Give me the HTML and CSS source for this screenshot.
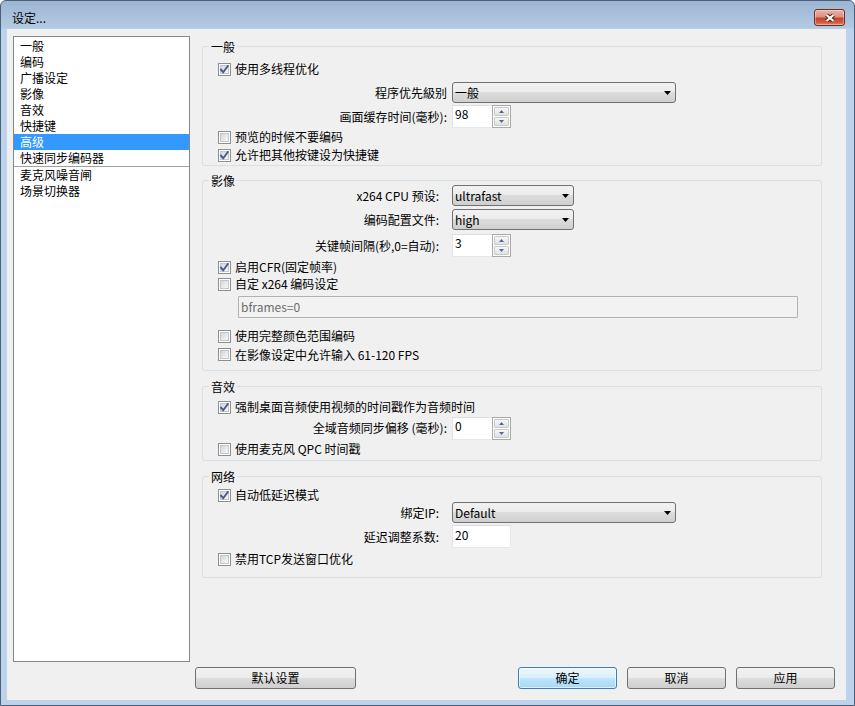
FILE: index.html
```html
<!DOCTYPE html>
<html lang="zh-CN">
<head>
<meta charset="utf-8">
<title>设定...</title>
<link rel="stylesheet" href="styles.css">
</head>
<body>
<div class="window">
  <div class="titlebar">
    <span class="title">设定...</span>
    <span class="close"><svg class="close-x" width="14" height="10" viewBox="0 0 14 10"><path class="x-out" d="M3.5 2 L10.5 8 M10.5 2 L3.5 8"/><path class="x-in" d="M3.5 2 L10.5 8 M10.5 2 L3.5 8"/></svg></span>
  </div>
  <div class="client">
    <div class="main">
      <ul class="list">
        <li>一般</li>
        <li>编码</li>
        <li>广播设定</li>
        <li>影像</li>
        <li>音效</li>
        <li>快捷键</li>
        <li class="sel">高级</li>
        <li>快速同步编码器</li>
        <li class="sep"></li>
        <li>麦克风噪音闸</li>
        <li>场景切换器</li>
      </ul>
      <div class="panel">
        <fieldset class="group g1">
          <legend>一般</legend>
          <div class="body">
            <label class="check"><span class="cb"><span class="cb-in"><svg class="tick" viewBox="0 0 9 9"><path d="M0.4 4 L3.2 7.2 L8.4 0.2"/></svg></span></span>使用多线程优化</label>
            <div class="row"><span class="lbl">程序优先級别</span><div class="combo w224"><span>一般</span><svg class="arrow" viewBox="0 0 7 4"><path d="M0 0 H7 L3.5 4 Z"/></svg></div></div>
            <div class="row"><span class="lbl">画面缓存时间(毫秒):</span><div class="spin"><span class="spin-val">98</span><span class="spin-btns"><span class="spin-btn"><svg class="tri" viewBox="0 0 5 3"><path d="M0 3 L2.5 0 L5 3 Z"/></svg></span><span class="spin-btn"><svg class="tri" viewBox="0 0 5 3"><path d="M0 0 H5 L2.5 3 Z"/></svg></span></span></div></div>
            <label class="check"><span class="cb"><span class="cb-in"></span></span>预览的时候不要编码</label>
            <label class="check"><span class="cb"><span class="cb-in"><svg class="tick" viewBox="0 0 9 9"><path d="M0.4 4 L3.2 7.2 L8.4 0.2"/></svg></span></span>允许把其他按键设为快捷键</label>
          </div>
        </fieldset>

        <fieldset class="group g2">
          <legend>影像</legend>
          <div class="body">
            <div class="row"><span class="lbl lbl-n">x264 CPU 预设:</span><div class="combo w122"><span>ultrafast</span><svg class="arrow" viewBox="0 0 7 4"><path d="M0 0 H7 L3.5 4 Z"/></svg></div></div>
            <div class="row"><span class="lbl lbl-n">编码配置文件:</span><div class="combo w122"><span>high</span><svg class="arrow" viewBox="0 0 7 4"><path d="M0 0 H7 L3.5 4 Z"/></svg></div></div>
            <div class="row"><span class="lbl lbl-n">关键帧间隔(秒,0=自动):</span><div class="spin"><span class="spin-val">3</span><span class="spin-btns"><span class="spin-btn"><svg class="tri" viewBox="0 0 5 3"><path d="M0 3 L2.5 0 L5 3 Z"/></svg></span><span class="spin-btn"><svg class="tri" viewBox="0 0 5 3"><path d="M0 0 H5 L2.5 3 Z"/></svg></span></span></div></div>
            <label class="check"><span class="cb"><span class="cb-in"><svg class="tick" viewBox="0 0 9 9"><path d="M0.4 4 L3.2 7.2 L8.4 0.2"/></svg></span></span>启用CFR(固定帧率)</label>
            <label class="check"><span class="cb"><span class="cb-in"></span></span>自定 x264 编码设定</label>
            <div class="field-wide">bframes=0</div>
            <label class="check"><span class="cb"><span class="cb-in"></span></span>使用完整颜色范围编码</label>
            <label class="check"><span class="cb"><span class="cb-in"></span></span>在影像设定中允许输入 61-120 FPS</label>
          </div>
        </fieldset>

        <fieldset class="group g3">
          <legend>音效</legend>
          <div class="body">
            <label class="check"><span class="cb"><span class="cb-in"><svg class="tick" viewBox="0 0 9 9"><path d="M0.4 4 L3.2 7.2 L8.4 0.2"/></svg></span></span>强制桌面音频使用视频的时间戳作为音频时间</label>
            <div class="row"><span class="lbl">全域音频同步偏移 (毫秒):</span><div class="spin"><span class="spin-val">0</span><span class="spin-btns"><span class="spin-btn"><svg class="tri" viewBox="0 0 5 3"><path d="M0 3 L2.5 0 L5 3 Z"/></svg></span><span class="spin-btn"><svg class="tri" viewBox="0 0 5 3"><path d="M0 0 H5 L2.5 3 Z"/></svg></span></span></div></div>
            <label class="check"><span class="cb"><span class="cb-in"></span></span>使用麦克风 QPC 时间戳</label>
          </div>
        </fieldset>

        <fieldset class="group g4">
          <legend>网络</legend>
          <div class="body">
            <label class="check"><span class="cb"><span class="cb-in"><svg class="tick" viewBox="0 0 9 9"><path d="M0.4 4 L3.2 7.2 L8.4 0.2"/></svg></span></span>自动低延迟模式</label>
            <div class="row"><span class="lbl lbl-n">绑定IP:</span><div class="combo w224"><span>Default</span><svg class="arrow" viewBox="0 0 7 4"><path d="M0 0 H7 L3.5 4 Z"/></svg></div></div>
            <div class="row"><span class="lbl lbl-n">延迟调整系数:</span><div class="field">20</div></div>
            <label class="check"><span class="cb"><span class="cb-in"></span></span>禁用TCP发送窗口优化</label>
          </div>
        </fieldset>
      </div>
    </div>
    <div class="buttons">
      <span class="btn btn-wide">默认设置</span>
      <span class="btn btn-default">确定</span>
      <span class="btn">取消</span>
      <span class="btn">应用</span>
    </div>
  </div>
</div>
</body>
</html>
```

FILE: styles.css
```css
* { box-sizing: border-box; }
html, body { margin: 0; padding: 0; }
body {
  width: 855px;
  height: 706px;
  overflow: hidden;
  font-family: "Noto Sans CJK SC", "Noto Sans", sans-serif;
  font-size: 12px;
  line-height: 16px;
  color: #000;
  background: #fff;
}

.window {
  width: 855px;
  height: 706px;
  display: flex;
  flex-direction: column;
  border: 1px solid #4b5f7c;
  border-radius: 6px 6px 0 0;
  background: linear-gradient(#9cb5d1 0px, #b3cae4 27px, #bcd3eb 28px, #bcd3eb 100%);
}

.titlebar {
  flex: none;
  height: 28px;
  display: flex;
  align-items: center;
  justify-content: space-between;
  padding: 5px 9px 0 11px;
}
.title { line-height: 16px; }
.close {
  width: 31px;
  height: 17px;
  display: flex;
  align-items: center;
  justify-content: center;
  border: 1px solid #6e2c22;
  border-radius: 3px;
  background: linear-gradient(#ebb3a6 0%, #dd9180 45%, #c8452c 55%, #cf583e 80%, #e28468 100%);
  box-shadow: inset 0 0 0 1px rgba(255, 255, 255, 0.35);
}
.close-x { display: block; }
.x-out { stroke: #4a1f19; stroke-width: 4.2; fill: none; }
.x-in { stroke: #fff; stroke-width: 2.2; fill: none; }

.client {
  flex: 1;
  margin: 0 8px 5px 6px;
  padding: 7px 0 0 6px;
  background: #f0f0f0;
  display: flex;
  flex-direction: column;
}

.main {
  flex: none;
  height: 626px;
  display: flex;
}

.list {
  flex: none;
  width: 177px;
  height: 626px;
  margin: 0;
  padding: 1px 0 0;
  list-style: none;
  background: #fff;
  border: 1px solid #828790;
}
.list li {
  height: 16px;
  line-height: 16px;
  padding-left: 6px;
  white-space: nowrap;
}
.list li.sel { background: #3399ff; color: #fff; }
.list li.sep { height: 1px; padding: 0; background: #a0a0a0; }

.panel {
  margin-left: 12px;
  padding-top: 4px;
  width: 620px;
  display: flex;
  flex-direction: column;
}

.group {
  margin: 0;
  padding: 0;
  min-width: 0;
  border: 1px solid #d5dfe5;
  border-radius: 3px;
}
.group legend {
  margin-left: 6px;
  padding: 0 2px;
  line-height: 13px;
}
.g2 { margin-top: 8px; }
.g3, .g4 { margin-top: 9px; }

.body {
  display: grid;
  align-items: center;
  justify-items: start;
  padding-left: 15px;
}
.g1 .body { padding-top: 7px; padding-bottom: 3px; grid-template-rows: 18px 29px 19px 22px 14px; }
.g2 .body { padding-top: 1px; padding-bottom: 8px; grid-template-rows: 15px 33px 19px 24px 10px 36px 22px 15px; }
.g3 .body { padding-top: 7px; padding-bottom: 4px; grid-template-rows: 14px 28px 14px; }
.g4 .body { padding-top: 4px; padding-bottom: 10px; grid-template-rows: 16px 19px 29px 16px; }

.check {
  display: flex;
  align-items: center;
  gap: 4px;
  height: 16px;
  white-space: nowrap;
}
.cb {
  flex: none;
  width: 13px;
  height: 13px;
  padding: 1px;
  border: 1px solid #8e8f8f;
  background: #fff;
}
.cb-in {
  display: block;
  width: 9px;
  height: 9px;
  border: 1px solid #c3c7cc;
  background: linear-gradient(135deg, #d2d6db 0%, #e8eaec 55%, #f7f7f7 100%);
}
.tick {
  display: block;
  width: 9px;
  height: 9px;
  margin: -1px;
  overflow: visible;
  fill: none;
  stroke: #4a5a8c;
  stroke-width: 1.9;
}

.row {
  display: flex;
  align-items: center;
  white-space: nowrap;
}
.lbl {
  flex: none;
  width: 229px;
  margin-right: 5px;
  text-align: right;
}
.lbl.lbl-n { width: 221px; margin-right: 13px; }

.combo {
  height: 21px;
  display: flex;
  align-items: center;
  justify-content: space-between;
  padding: 0 4px 0 2px;
  border: 1px solid #707070;
  border-radius: 3px;
  background: linear-gradient(#f2f2f2 0%, #ebebeb 50%, #dddddd 50%, #cfcfcf 100%);
}
.w224 { width: 224px; }
.w122 { width: 122px; }
.arrow { display: block; width: 7px; height: 4px; fill: #000; }

.spin {
  width: 59px;
  height: 23px;
  display: flex;
  background: #fff;
  border: 1px solid;
  border-color: #dadde2 #e3e9ef #e3e9ef #e2e3ea;
}
.spin-val { flex: 1; padding-left: 2px; line-height: 16px; }
.spin-btns {
  width: 19px;
  margin: -1px -1px -1px 0;
  display: flex;
  flex-direction: column;
  gap: 1px;
  padding: 1px;
  border: 1px solid #a9a9a9;
  background: #fff;
}
.spin-btn {
  flex: 1;
  display: flex;
  align-items: center;
  justify-content: center;
  border: 1px solid #c9c9c9;
  border-radius: 1px;
  background: linear-gradient(#f7f7f7, #e1e1e1);
}
.tri { display: block; width: 5px; height: 3px; fill: #4e6a9c; }

.field {
  width: 59px;
  height: 23px;
  padding: 1px 0 0 2px;
  background: #fff;
  border: 1px solid;
  border-color: #dadde2 #e3e9ef #e3e9ef #e2e3ea;
}
.field-wide {
  width: 560px;
  height: 22px;
  margin-left: 20px;
  padding: 2px 0 0 2px;
  color: #6d6d6d;
  background: #f2f2f2;
  border: 1px solid #b2b2b2;
  border-radius: 1px;
}

.buttons {
  flex: none;
  display: flex;
  height: 22px;
  margin-top: 5px;
  padding: 0 11px 0 182px;
}
.btn {
  width: 99px;
  height: 22px;
  margin-left: 10px;
  display: flex;
  align-items: center;
  justify-content: center;
  border: 1px solid #707070;
  border-radius: 3px;
  background: linear-gradient(#f2f2f2 0%, #ebebeb 50%, #dddddd 50%, #cfcfcf 100%);
  white-space: nowrap;
}
.btn-wide { width: 161px; margin-left: 0; margin-right: auto; }
.btn-default {
  border-color: #3c7fb1;
  background: linear-gradient(#eaf6fd 0%, #d9f0fc 50%, #bee6fd 50%, #a7d9f5 100%);
  box-shadow: inset 0 0 0 1px rgba(255, 255, 255, 0.6);
}
```
